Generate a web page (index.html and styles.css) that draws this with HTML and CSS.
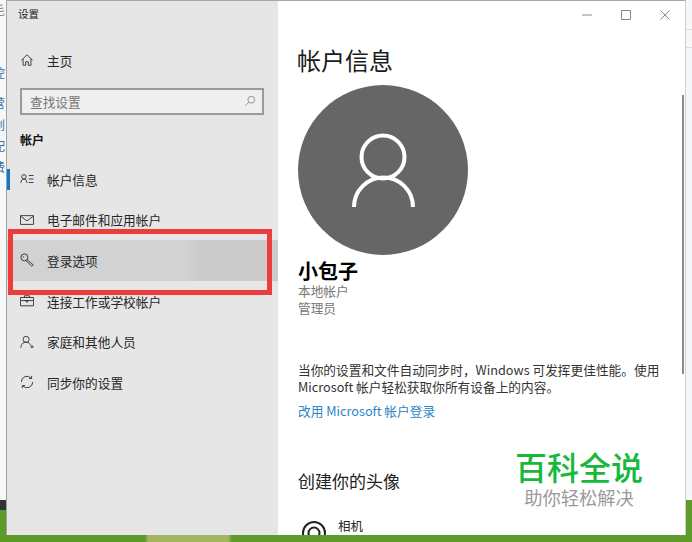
FILE: index.html
```html
<!DOCTYPE html>
<html lang="zh-CN">
<head>
  <meta charset="UTF-8" />
  <title>设置</title>
  <link rel="stylesheet" href="styles.css">
</head>
<body>

<div class="desktop">
  <!-- what is left of the window behind -->
  <div class="behind">
    <span class="behind-char c1">毛</span>
    <span class="behind-char c2">控</span>
    <span class="behind-char c3">营</span>
    <span class="behind-char c4">创</span>
    <span class="behind-char c5">配</span>
    <span class="behind-char c6">费</span>
    <div class="behind-lines"></div>
    <div class="behind-dark"></div>
  </div>

  <div class="window">
    <aside class="sidebar">
      <div class="app-title">设置</div>

      <div class="nav-row home-row">
        <svg class="nav-icon" viewBox="0 0 16 16"><path d="M1.500 8.500 8 2l6.500 6.500M3.500 6.500V14h3v-4h3v4h3V6.500"/></svg>
        <span>主页</span>
      </div>

      <div class="search">
        <span>查找设置</span>
        <svg class="search-icon" viewBox="0 0 14 14"><circle cx="8.500" cy="5.500" r="4"/><path d="M5.500 8.500 1.500 12.500"/></svg>
      </div>

      <div class="section-title">帐户</div>

      <div class="nav-row current">
        <svg class="nav-icon" viewBox="0 0 16 16"><circle cx="4.500" cy="5.500" r="2.500"/><path d="M1 12.500c0-6 7-6 7 0M10 4h5.500M10 8h5.500M10 12h5.500"/></svg>
        <span>帐户信息</span>
      </div>
      <div class="nav-row">
        <svg class="nav-icon" viewBox="0 0 16 16"><path d="M.5 3h15v10H.5zM.5 3.500 8 9l7.500-5.500"/></svg>
        <span>电子邮件和应用帐户</span>
      </div>
      <div class="nav-row selected">
        <svg class="nav-icon" viewBox="0 0 16 16"><circle cx="5" cy="5" r="4"/><path d="M8 7.500l7 6-1.500 1.500-7-6.500M3 4.500h1.500"/></svg>
        <span>登录选项</span>
      </div>
      <div class="nav-row">
        <svg class="nav-icon" viewBox="0 0 16 16"><path d="M.5 4h15v9.500H.5zM5 4V2h6v2M.5 7.500h15M7 7.500h2v1.500H7z"/></svg>
        <span>连接工作或学校帐户</span>
      </div>
      <div class="nav-row">
        <svg class="nav-icon" viewBox="0 0 16 16"><circle cx="7" cy="5" r="3.500"/><path d="M1 14.500c0-8 10-8 11-2.500M12 13.500h3.500M13.700 11.700v3.500"/></svg>
        <span>家庭和其他人员</span>
      </div>
      <div class="nav-row">
        <svg class="nav-icon" viewBox="0 0 16 16"><path d="M1.500 8a6.500 6.500 0 0 1 11.500-4.200M14.500 8a6.500 6.500 0 0 1-11.500 4.200M13.300 1v3h-3M2.700 15v-3h3"/></svg>
        <span>同步你的设置</span>
      </div>
    </aside>

    <main class="content">
      <div class="controls">
        <svg viewBox="0 0 10 10"><path d="M0 5h10"/></svg>
        <svg viewBox="0 0 10 10"><path d="M.5.5h9v9h-9z"/></svg>
        <svg viewBox="0 0 10 10"><path d="M.5.500l9 9M9.500.500l-9 9"/></svg>
      </div>

      <h1 class="page-title">帐户信息</h1>

      <div class="avatar">
        <svg viewBox="0 0 170 170"><circle cx="85" cy="72" r="21.500"/><path d="M56 122a29.500 29.500 0 0 1 59 0"/></svg>
      </div>

      <div class="user-name">小包子</div>
      <div class="user-meta">本地帐户</div>
      <div class="user-meta">管理员</div>

      <p class="info">当你的设置和文件自动同步时，Windows 可发挥更佳性能。使用 Microsoft 帐户轻松获取你所有设备上的内容。</p>
      <a class="link">改用 Microsoft 帐户登录</a>

      <h2 class="sub-title">创建你的头像</h2>

      <div class="camera-row">
        <svg viewBox="0 0 24 24"><circle cx="12" cy="13" r="11"/><circle cx="12" cy="13" r="5.500"/></svg>
        <span>相机</span>
      </div>

      <div class="scroll-thumb"></div>
    </main>

    <div class="red-box"></div>
  </div>

  <div class="watermark">
    <div class="wm-big">百科全说</div>
    <div class="wm-small">助你轻松解决</div>
  </div>
</div>

</body>
</html>
```

FILE: styles.css
```css
* { box-sizing: border-box; }

body {
  margin: 0;
  font-family: "Noto Sans CJK SC", "Noto Sans", sans-serif;
  color: #222;
}

.desktop {
  position: relative;
  width: 692px;
  height: 542px;
  overflow: hidden;
  background: linear-gradient(90deg, #5c9a2a 0, #5c9a2a 145px, #a3b560 148px, #a3b560 228px, #5f9a2c 232px);
}

.behind {
  position: absolute;
  top: 0;
  left: 0;
  width: 692px;
  height: 500px;
  background: #f6f7f8;
}

.behind-char {
  position: absolute;
  left: -7px;
  font-size: 12px;
  line-height: 14px;
  color: #3f6fa5;
}

.c1 { top: 3px; color: #888; }
.c2 { top: 66px; }
.c3 { top: 96px; }
.c4 { top: 118px; }
.c5 { top: 139px; }
.c6 { top: 160px; }

.behind-lines {
  position: absolute;
  top: 29px;
  right: 0;
  width: 6px;
  height: 19px;
  border-top: 1px solid #ddd;
  border-bottom: 1px solid #ddd;
}

.behind-dark {
  position: absolute;
  left: 0;
  bottom: -10px;
  width: 6px;
  height: 10px;
  background: #333;
}

/* settings window */
.window {
  position: absolute;
  top: 0;
  left: 6px;
  width: 680px;
  height: 535px;
  display: flex;
  border-top: 1px solid #a8a8a8;
  border-left: 1px solid #a0a0a0;
  border-right: 1px solid #cfcfcf;
}

.sidebar {
  width: 271px;
  flex-shrink: 0;
  background: #e6e6e6;
  display: flex;
  flex-direction: column;
}

.app-title {
  font-size: 10.500px;
  line-height: 14px;
  padding: 6px 0 0 11px;
  height: 39px;
}

.nav-row {
  display: flex;
  align-items: center;
  gap: 13px;
  height: 40.700px;
  padding-left: 13px;
  font-size: 12.700px;
  color: #262626;
  flex-shrink: 0;
}

.nav-icon {
  width: 14px;
  height: 14px;
  fill: none;
  stroke: #3a3a3a;
  stroke-width: 1.100;
  flex-shrink: 0;
}

.current {
  position: relative;
}

.current::before {
  content: "";
  position: absolute;
  left: 0;
  top: 10px;
  width: 3px;
  height: 21px;
  background: #0f78c8;
}

.selected {
  background: linear-gradient(90deg, #d2d2d2 0, #d2d2d2 182px, #cbcbcb 190px);
}

.search {
  margin: 7px 0 0 13px;
  width: 244px;
  height: 27px;
  border: 2px solid #9a9a9a;
  background: #efefef;
  display: flex;
  align-items: center;
  justify-content: space-between;
  padding: 0 6px 0 8px;
  font-size: 12.700px;
  color: #777;
}

.search-icon {
  width: 12px;
  height: 12px;
  fill: none;
  stroke: #888;
  stroke-width: 1;
}

.section-title {
  font-size: 12px;
  font-weight: 700;
  line-height: 16px;
  padding: 17px 0 0 13px;
  height: 44px;
  color: #111;
}

.content {
  position: relative;
  flex: 1;
  background: #fff;
  padding-left: 20px;
  overflow: hidden;
}

.controls {
  display: flex;
  justify-content: flex-end;
  gap: 29px;
  padding: 9px 15px 0 0;
  height: 36px;
}

.controls svg {
  width: 10px;
  height: 10px;
  fill: none;
  stroke: #8a8a8a;
  stroke-width: 1;
}

.page-title {
  margin: 0 0 0 -1px;
  padding-top: 6px;
  font-size: 24px;
  font-weight: 400;
  line-height: 34px;
  height: 48px;
  color: #1a1a1a;
}

.avatar {
  width: 170px;
  height: 170px;
  border-radius: 50%;
  background: #666;
}

.avatar svg {
  display: block;
  width: 170px;
  height: 170px;
  fill: none;
  stroke: #fff;
  stroke-width: 4;
}

.user-name {
  font-size: 20px;
  font-weight: 700;
  line-height: 23px;
  margin-top: 4px;
  color: #000;
}

.user-meta {
  font-size: 12.700px;
  line-height: 17px;
  color: #777;
}

.info {
  margin: 45px 0 0;
  width: 366px;
  font-size: 12.700px;
  line-height: 17px;
  color: #333;
}

.link {
  display: block;
  margin-top: 7px;
  font-size: 12.700px;
  line-height: 17px;
  color: #2a86c8;
}

.sub-title {
  margin: 0;
  padding-top: 50px;
  font-size: 17px;
  font-weight: 400;
  line-height: 24px;
  color: #222;
}

.camera-row {
  display: flex;
  gap: 12px;
  margin: 24px 0 0 4px;
  font-size: 12.500px;
  line-height: 18px;
}

.camera-row svg {
  width: 24px;
  height: 24px;
  margin-top: 3px;
  fill: none;
  stroke: #222;
  stroke-width: 2;
  flex-shrink: 0;
}

.scroll-thumb {
  position: absolute;
  top: 94px;
  right: 1px;
  width: 2px;
  height: 279px;
  background: #8c8c8c;
}

/* red annotation drawn over the screenshot */
.red-box {
  position: absolute;
  top: 228px;
  left: 1px;
  width: 264px;
  height: 66px;
  border: 5.500px solid #ec3c3c;
}

.watermark {
  position: absolute;
  top: 447px;
  left: 515px;
  width: 128px;
  text-align: center;
}

.wm-big {
  font-size: 32px;
  font-weight: 500;
  line-height: 38px;
  color: #18b83c;
  white-space: nowrap;
}

.wm-small {
  font-size: 18.300px;
  line-height: 24px;
  color: #9a9a9a;
  white-space: nowrap;
}
```
